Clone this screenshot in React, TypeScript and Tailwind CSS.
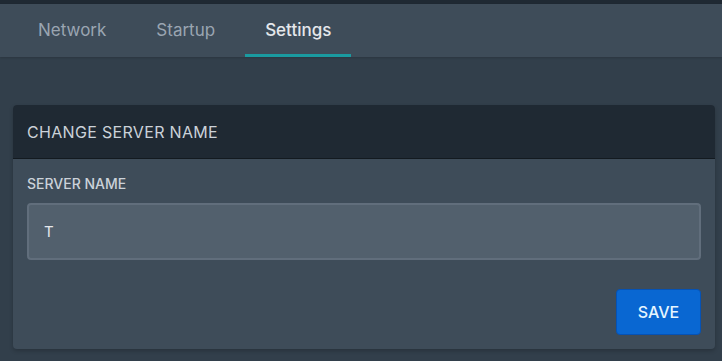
import React, { useState } from "react";

const TABS = ["Network", "Startup", "Settings"];

export default function App() {
  const [name, setName] = useState("T");
  const active = "Settings";

  return (
    <div
      className="min-h-[361px] w-full bg-[#323f4b]"
      style={{ fontFamily: "Inter, 'Noto Sans', sans-serif" }}
    >
      <div className="h-[4px] bg-[#1f2933]" />
      <div className="h-[53px] bg-[#3e4c59] shadow-[0_1px_2px_rgba(0,0,0,0.15)] flex items-stretch pl-[18px] gap-[10px]">
        {TABS.map((t) => (
          <button
            key={t}
            className={`px-5 text-[17px] border-b-[3px] pt-[3px] ${
              t === active
                ? "border-[#1a9aa0] text-[#e4e7eb] font-medium"
                : "border-transparent text-[#9aa5b1]"
            }`}
          >
            {t}
          </button>
        ))}
      </div>

      <div className="pt-[48px] pl-[13px] pr-[7px]">
        <div className="rounded-[4px] overflow-hidden bg-[#3e4c59] shadow-[0_2px_4px_rgba(0,0,0,0.2)]">
          <div className="h-[54px] bg-[#1f2933] border-b border-[#131a20] flex items-center px-[14px]">
            <span className="text-[16px] tracking-[0.02em] text-[#cbd2d9] uppercase">Change Server Name</span>
          </div>
          <div className="px-[14px] pt-[14px] pb-[14px]">
            <label className="block text-[14px] font-medium text-[#cbd2d9] uppercase mb-[9px]">
              Server Name
            </label>
            <input
              value={name}
              onChange={(e) => setName(e.target.value)}
              className="w-full h-[57px] rounded-[4px] bg-[#52606d] border-2 border-[#616e7c] px-[15px] text-[15px] text-[#e4e7eb] outline-none"
            />
            <div className="flex justify-end mt-[29px]">
              <button className="w-[85px] h-[46px] rounded-[4px] bg-[#0967d2] border border-[#0552b5] text-[#e6f6ff] text-[16px] font-medium uppercase">
                Save
              </button>
            </div>
          </div>
        </div>
      </div>
    </div>
  );
}
